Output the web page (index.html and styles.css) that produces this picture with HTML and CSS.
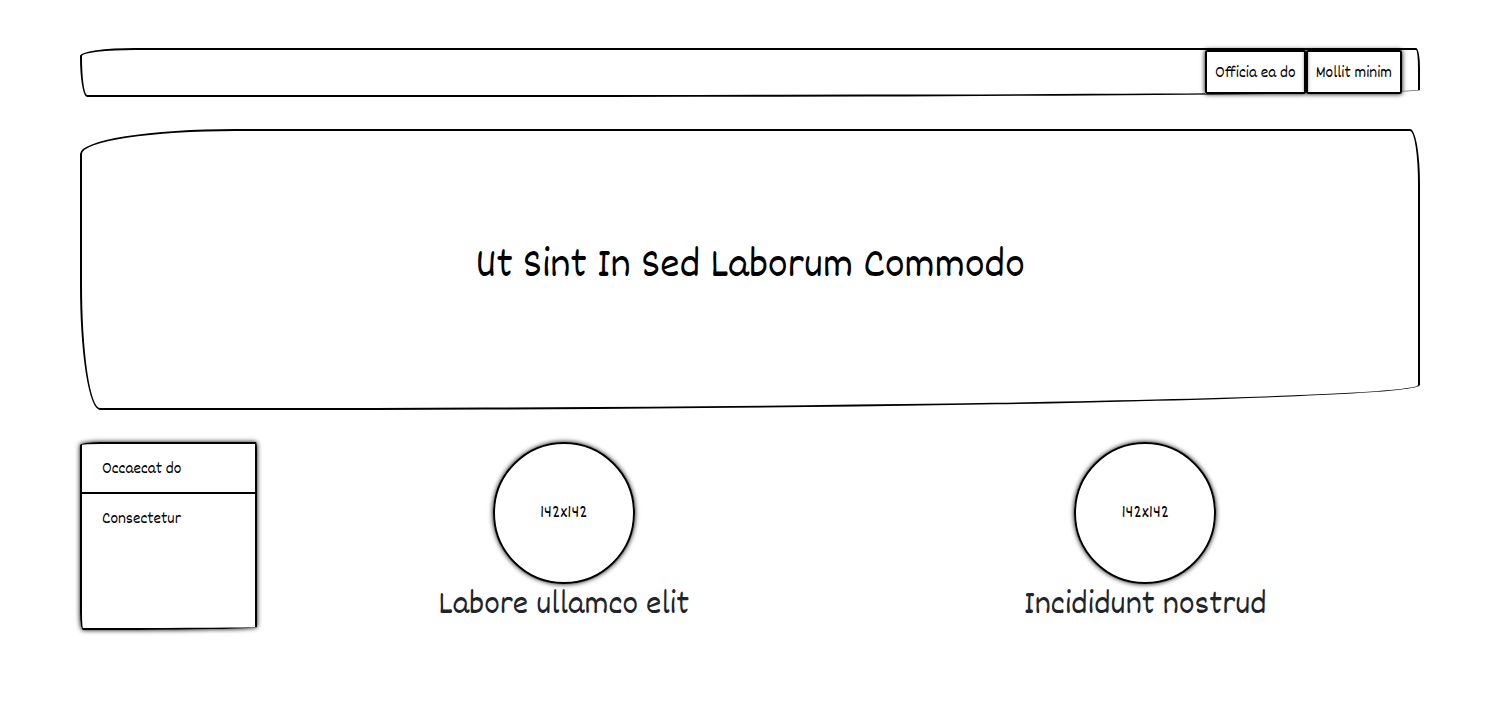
FILE: index.html
```html
<!DOCTYPE html>
<html lang="la">
<head>
<meta charset="utf-8">
<meta name="viewport" content="width=device-width, initial-scale=1">
<title>Ut Sint In Sed Laborum Commodo</title>
<link rel="stylesheet" href="styles.css">
</head>
<body>
<div class="page">
  <header class="navbar">
    <nav class="nav-group">
      <a class="nav-link" href="#">Officia ea do</a>
      <a class="nav-link" href="#">Mollit minim</a>
    </nav>
  </header>
  <section class="hero">
    <h1 class="hero-title">Ut Sint In Sed Laborum Commodo</h1>
  </section>
  <main class="content">
    <nav class="sidebar">
      <a class="sidebar-link" href="#">Occaecat do</a>
      <a class="sidebar-link" href="#">Consectetur</a>
    </nav>
    <div class="features">
      <article class="feature">
        <div class="avatar">142x142</div>
        <h2 class="feature-title">Labore ullamco elit</h2>
      </article>
      <article class="feature">
        <div class="avatar">142x142</div>
        <h2 class="feature-title">Incididunt nostrud</h2>
      </article>
    </div>
  </main>
</div>
</body>
</html>
```
FILE: styles.css
```css
* { box-sizing: border-box; }
body {
  margin: 0;
  background: #fff;
  color: #000;
  font-family: Dekko, "Gloria Hallelujah", Neucha, cursive;
  font-size: 17px;
  line-height: 24px;
}
a { color: inherit; text-decoration: none; }
.page {
  display: flex;
  flex-direction: column;
  gap: 32px;
  padding: 48px 80px;
}
.navbar {
  display: flex;
  align-items: flex-start;
  justify-content: flex-end;
  min-height: 49px;
  padding: 0 16px;
  border: 2px solid #000;
  border-radius: 55px 4px 900px 7px / 8px 20px 7px 40px;
}
.nav-group {
  display: flex;
  background: #fff;
}
.nav-link {
  padding: 10px 8px 6px;
  border: 2px solid #000;
  border-radius: 2px;
  box-shadow: 0 0 5px #000;
  white-space: nowrap;
}
.hero {
  display: flex;
  align-items: center;
  justify-content: center;
  min-height: 281px;
  padding: 32px 32px 36px;
  border: 2px solid #000;
  border-radius: 155px 10px 1160px 20px / 25px 55px 25px 125px;
}
.hero-title {
  margin: 0;
  font-size: 44px;
  font-weight: 400;
  line-height: 48px;
  text-align: center;
}
.content {
  display: flex;
  gap: 16px;
}
.sidebar {
  flex: 0 0 177px;
  min-height: 188px;
  border: 2px solid #000;
  border-radius: 20px 1px 150px 3px / 3px 7px 3px 17px;
  box-shadow: 0 0 5px #000;
}
.sidebar-link {
  display: block;
  padding: 14px 20px 10px;
}
.sidebar-link + .sidebar-link { border-top: 2px solid #000; }
.features {
  display: grid;
  flex: 1;
  grid-template-columns: 1fr 1fr;
  margin-right: -16px;
}
.feature {
  display: flex;
  flex-direction: column;
  align-items: center;
}
.avatar {
  display: flex;
  align-items: center;
  justify-content: center;
  width: 142px;
  aspect-ratio: 1;
  padding-top: 2px;
  border: 2px solid #000;
  border-radius: 50%;
  box-shadow: 0 0 5px #000;
  font-size: 19px;
}
.feature-title {
  margin: 0;
  color: #212529;
  font-size: 35px;
  font-weight: 400;
  line-height: 44px;
}
```
